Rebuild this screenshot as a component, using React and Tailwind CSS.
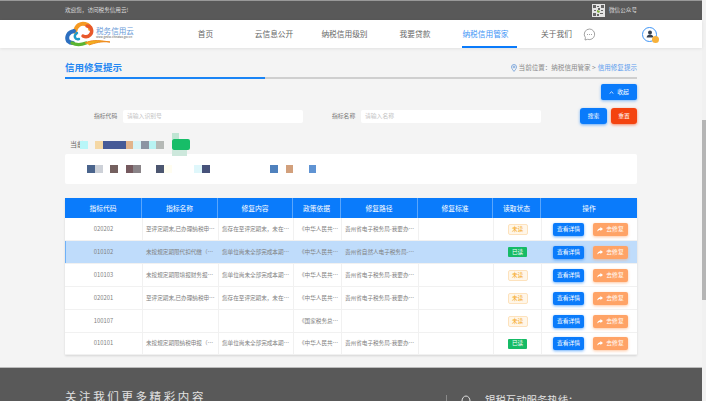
import React from "react";

const navItems = [
  { label: "首页", width: "w-[67px]" },
  { label: "云信息公开", width: "w-[70px]" },
  { label: "纳税信用级别", width: "w-[71px]" },
  { label: "我要贷款", width: "w-[70px]" },
  { label: "纳税信用管家", width: "w-[71px]", active: true },
  { label: "关于我们", width: "w-[71px]" },
];

const columns = ["指标代码", "指标名称", "修复内容", "政策依据", "修复路径", "修复标准", "读取状态", "操作"];

const gridCols = "grid grid-cols-[77px_76px_75px_48px_77px_75px_48px_96px]";

const rows = [
  { code: "020202", name: "至评定期末,已办理纳税申…", content: "您存在至评定期末，未在…", policy: "《中华人民共…", path: "贵州省电子税务局-我要办…", read: false },
  { code: "010102", name: "未按规定期限代扣代缴（…", content: "您单位尚未全部完成本期…", policy: "《中华人民共…", path: "贵州省自然人电子税务局-…", read: true, selected: true },
  { code: "010103", name: "未按规定期限填报财务报…", content: "您单位尚未全部完成本期…", policy: "《中华人民共…", path: "贵州省电子税务局-我要办…", read: false },
  { code: "020201", name: "至评定期末,已办理纳税申…", content: "您存在至评定期末，未在…", policy: "《中华人民共…", path: "贵州省电子税务局-我要办…", read: false },
  { code: "100107", name: "", content: "", policy: "《国家税务总…", path: "", read: false },
  { code: "010101", name: "未按规定期限纳税申报（…", content: "您单位尚未全部完成本期…", policy: "《中华人民共…", path: "贵州省电子税务局-我要办…", read: true, short: true },
];

const Logo = () => (
  <svg width="46" height="26" viewBox="0 0 46 26" fill="none">
    <path d="M10 11C11 4 16 2 20 3C24 4 25 6 25 8" stroke="#f59a23" strokeWidth="4" strokeLinecap="round" />
    <path d="M22 5C27 5 28 11 25 14C23 16 20 16 18 15" stroke="#e8582a" strokeWidth="3.4" strokeLinecap="round" />
    <path d="M9 10C3 11 1 16 3 20C4 21 6 22 8 22" stroke="#2c6fc0" strokeWidth="4" strokeLinecap="round" />
    <path d="M12 12C8 15 10 19 14 18" stroke="#1f9bc9" strokeWidth="2.4" strokeLinecap="round" />
    <path d="M7 22C11 24 16 24 21 22" stroke="#5cb531" strokeWidth="3.2" strokeLinecap="round" />
    <path d="M20 22C27 19 31 19 45 21C36 20 30 22 24 24" fill="#f2b01e" stroke="#ef8a1f" strokeWidth="1" />
  </svg>
);

const QrCode = () => (
  <svg width="13" height="13" viewBox="0 0 13 13">
    <rect width="13" height="13" fill="#e4e4e4" />
    <path d="M1 1h3v3H1zM9 1h3v3H9zM1 9h3v3H1zM5 2h2v1H5zM6 4h2v2H6zM2 6h2v1H2zM9 6h2v1H9zM8 9h3v1H8zM5 10h2v2H5z" fill="#666" />
    <path d="M5 6l3 1-1 2-2-1z" fill="#7fae3a" />
  </svg>
);

const ShareIcon = () => (
  <svg width="6" height="5" viewBox="0 0 6 5" fill="#fff">
    <path d="M3.4 0L6 2.1 3.4 4V2.9C2 2.9 1 3.4.2 4.6.4 2.6 1.5 1.4 3.4 1.2z" />
  </svg>
);

const Mosaic = ({ className }) => <i className={`block h-full ${className}`} />;

const App = () => {
  return (
    <div className="flex w-[706px] h-[401px] overflow-hidden bg-[#f1f1f1] font-['Noto_Sans_CJK_SC','Liberation_Sans',sans-serif]">
      <div className="w-[702px] shrink-0 flex flex-col bg-[#f4f4f4]">
        {/* top bar */}
        <div className="h-5 shrink-0 border-t border-[#999] bg-[#595959] flex items-center pl-[65px] pr-[65px] text-[5.6px] text-[#ddd]">
          <span>欢迎您，访问税务信用云!</span>
          <span className="ml-auto flex items-center gap-[4px]">
            <QrCode />
            <span>微信公众号</span>
          </span>
        </div>

        {/* nav */}
        <div className="h-7 shrink-0 bg-white flex items-center pl-[65px] shadow-[0_1px_3px_rgba(0,0,0,0.08)] relative">
          <div className="w-[107px] flex items-center relative">
            <Logo />
            <div className="absolute left-[31px] top-[6px] leading-none">
              <div className="text-[7.6px] text-[#6a9bd8] whitespace-nowrap">税务信用云</div>
              <div className="text-[2.8px] text-[#555] mt-[1.5px] whitespace-nowrap">www.gzsfxx.chinatax.gov.cn</div>
            </div>
          </div>
          {navItems.map((item) => (
            <div
              key={item.label}
              className={`${item.width} h-full flex items-center justify-center relative text-[7.7px] ${item.active ? "text-[#3d94f6]" : "text-[#666]"}`}
            >
              {item.label}
              {item.active && <span className="absolute bottom-0 left-[12px] w-[55px] h-[2px] bg-[#0a7bfb]" />}
            </div>
          ))}
          <svg className="ml-[-9px]" width="13" height="13" viewBox="0 0 13 13" fill="none" stroke="#8d8d8d" strokeWidth="0.8">
            <path d="M6.5 1A5.3 5.3 0 1 1 4.6 11.3L2 12 2.4 9.6A5.3 5.3 0 0 1 6.5 1Z" />
            <path d="M4 6.5h.8M6.1 6.5h.8M8.2 6.5h.8" strokeWidth="1" />
          </svg>
          <div className="ml-[46px] w-[15px] h-[15px] rounded-full border border-[#3d94f6] flex items-center justify-center relative">
            <svg width="8" height="8" viewBox="0 0 8 8" fill="#35404f">
              <circle cx="4" cy="2.4" r="2" />
              <path d="M.6 7.6C.8 5.2 2.2 4.4 4 4.4s3.2.8 3.4 3.2z" />
            </svg>
            <span className="absolute right-[-3px] bottom-[-2px] w-[7px] h-[7px] rounded-full bg-[#f7b13a]" />
          </div>
        </div>

        {/* content */}
        <div className="px-[65px] flex flex-col">
          <div className="mt-[11px] h-[17px] flex items-center justify-between">
            <span className="text-[9.5px] font-bold text-[#2487f2]">信用修复提示</span>
            <span className="flex items-center text-[6.55px] text-[#888]">
              <svg className="mr-[2px]" width="6" height="8" viewBox="0 0 6 8" fill="none" stroke="#6a9bd8" strokeWidth="0.8">
                <path d="M3 .5A2.5 2.5 0 0 1 5.5 3C5.5 4.7 3 7.4 3 7.4S.5 4.7.5 3A2.5 2.5 0 0 1 3 .5Z" />
                <circle cx="3" cy="3" r=".9" />
              </svg>
              当前位置：纳税信用管家 &gt; <span className="text-[#5a9bee] ml-[2px]">信用修复提示</span>
            </span>
          </div>

          <div className="mt-[1px] h-[2px] bg-[#cfcfcf]">
            <div className="w-[200px] h-full bg-[#1a84f5]" />
          </div>

          <div className="mt-[5px] flex justify-end">
            <button className="w-9 h-4 rounded-[2px] bg-[#0a7bfb] text-white text-[5.8px] flex items-center justify-center gap-[3px] shadow-[0_1px_3px_rgba(10,123,251,0.5)]">
              <svg width="5" height="3" viewBox="0 0 5 3" fill="none" stroke="#fff" strokeWidth="0.8">
                <path d="M.6 2.6 2.5.8l1.9 1.8" />
              </svg>
              收起
            </button>
          </div>

          {/* search */}
          <div className="mt-2 h-4 flex items-center text-[5.8px] text-[#777]">
            <span className="ml-[29px] w-[29px]">指标代码</span>
            <div className="w-[180px] h-[13px] rounded-[2px] bg-white flex items-center pl-1 text-[#c4c4c4]">请输入识别号</div>
            <span className="ml-[29px] w-[29px]">指标名称</span>
            <div className="w-[180px] h-[13px] rounded-[2px] bg-white flex items-center pl-1 text-[#c4c4c4]">请输入名称</div>
            <button className="ml-[39px] w-[27px] h-4 rounded-[3px] bg-[#0a7bfb] text-white text-[5.8px] shadow-[0_1px_3px_rgba(10,123,251,0.6)]">搜索</button>
            <button className="ml-[4px] w-[26px] h-4 rounded-[3px] bg-[#f4430f] text-white text-[5.8px] shadow-[0_1px_3px_rgba(244,67,15,0.6)]">重置</button>
          </div>

          {/* blurred notice */}
          <div className="mt-[15px] h-[11px] flex items-center relative">
            <span className="ml-[5px] w-[10px] text-[7px] text-[#666] leading-none whitespace-nowrap">当前</span>
            <div className="h-2 flex blur-[0.4px]">
              <Mosaic className="w-2 bg-[#b8f6f8]" />
              <Mosaic className="ml-[7px] w-2 bg-[#f5d8a5]" />
              <Mosaic className="w-[23px] bg-[#465a97]" />
              <Mosaic className="w-[7px] bg-[#e2b48c]" />
              <Mosaic className="w-2 bg-[#d5f3f7]" />
              <Mosaic className="w-2 bg-[#8c95a3]" />
              <Mosaic className="w-[7px] bg-[#b8f3f3]" />
              <Mosaic className="w-2 bg-[#b5b9b6]" />
            </div>
            <div className="ml-2 w-[18px] h-[11px] rounded-[2px] bg-[#17bd68] relative blur-[0.4px]">
              <span className="absolute left-0 top-[-6px] w-[7px] h-[6px] bg-[#bfe5d3]" />
              <span className="absolute left-0 top-[11px] w-[15px] h-[6px] bg-[#cde8dc]" />
            </div>
          </div>

          <div className="mt-1 h-[30px] rounded-[2px] bg-white flex items-center">
            <div className="ml-[22px] h-2 flex blur-[0.4px]">
              <Mosaic className="w-2 bg-[#4a648c]" />
              <Mosaic className="w-2 bg-[#cdd1d8]" />
              <Mosaic className="ml-[7px] w-2 bg-[#74605f]" />
              <Mosaic className="ml-2 w-[7px] bg-[#75595e]" />
              <Mosaic className="w-2 bg-[#8a8488]" />
              <Mosaic className="ml-[15px] w-2 bg-[#4c5670]" />
              <Mosaic className="w-2 bg-[#fffdf0]" />
              <Mosaic className="ml-[22px] w-2 bg-[#dff7fb]" />
              <Mosaic className="w-2 bg-[#46527a]" />
              <Mosaic className="ml-[60px] w-2 bg-[#4f81bd]" />
              <Mosaic className="ml-2 w-[7px] bg-[#d2a07c]" />
              <Mosaic className="ml-4 w-[7px] bg-[#5f93d3]" />
            </div>
          </div>

          {/* table */}
          <div className="mt-[14px] bg-white shadow-[0_1px_2px_rgba(0,0,0,0.12)]">
            <div className={`${gridCols} h-5 bg-[#0a7bfb] text-white text-[6.8px]`}>
              {columns.map((col) => (
                <div key={col} className="flex items-center justify-center border-r border-[#5aa6fc] last:border-r-0">
                  {col}
                </div>
              ))}
            </div>
            {rows.map((row) => (
              <div
                key={row.code}
                className={`${gridCols} ${row.short ? "h-[22px]" : "h-[23px]"} text-[5.6px] text-[#808080] border-b border-[#f1f1f1] ${row.selected ? "bg-[#bfdcfb] shadow-[inset_1px_0_0_#6fb1f7]" : "bg-white"}`}
              >
                <div className="flex items-center justify-center text-[5.8px]">{row.code}</div>
                {[row.name, row.content, row.policy, row.path].map((text, i) => (
                  <div key={i} className={`flex items-center min-w-0 ${i === 2 ? "pl-[5px]" : "pl-[3px]"} whitespace-nowrap border-l ${row.selected ? "border-[#bfdcfb]" : "border-[#f1f1f1]"}`}>
                    {text}
                  </div>
                ))}
                <div className={`border-l ${row.selected ? "border-[#bfdcfb]" : "border-[#f1f1f1]"}`} />
                <div className={`flex items-center justify-center border-l ${row.selected ? "border-[#bfdcfb]" : "border-[#f1f1f1]"}`}>
                  {row.read ? (
                    <span className="w-[19px] h-[10px] rounded-[1px] bg-[#16bb66] text-white flex items-center justify-center">已读</span>
                  ) : (
                    <span className="w-[20px] h-[11px] rounded-[2px] border border-[#fde2bd] bg-[#fff6e8] text-[#f5a623] flex items-center justify-center">未读</span>
                  )}
                </div>
                <div className={`flex items-center pl-[11px] border-l ${row.selected ? "border-[#bfdcfb]" : "border-[#f1f1f1]"}`}>
                  <button className="w-[31px] h-[13px] rounded-[2px] bg-[#0a7bfb] text-white text-[5.8px] shadow-[0_1px_3px_rgba(10,123,251,0.6)]">查看详情</button>
                  <button className="ml-[9px] w-[35px] h-[13px] rounded-[2px] bg-[#ffa366] text-white text-[5.8px] flex items-center justify-center gap-[3px] shadow-[0_1px_3px_rgba(255,163,102,0.6)]">
                    <ShareIcon />
                    去修复
                  </button>
                </div>
              </div>
            ))}
          </div>
        </div>

        {/* footer */}
        <div className="mt-3 flex-1 border-t border-[#bbb] bg-[#595959] pl-[65px] flex items-start text-[#e2e2e2]">
          <div className="w-[381px] mt-[23px] text-[11.5px] tracking-[2.6px] leading-none whitespace-nowrap">关注我们更多精彩内容</div>
          <div className="mt-[27px] h-3 w-px bg-[#8a8a8a]" />
          <svg className="ml-[14px] mt-[27px]" width="16" height="12" viewBox="0 0 16 12" fill="none" stroke="#e2e2e2" strokeWidth="1">
            <ellipse cx="5" cy="6" rx="4" ry="5" />
            <path d="M11 7c1.5.3 2.5 1.2 3 3" />
          </svg>
          <div className="ml-[8px] mt-[27px] text-[10.4px] leading-none whitespace-nowrap">银税互动服务热线：</div>
        </div>
      </div>

      {/* scrollbar */}
      <div className="w-1 shrink-0 bg-[#f1f1f1]">
        <div className="mt-[120px] h-[180px] bg-[#b5b5b5]" />
      </div>
    </div>
  );
};

export default App;
